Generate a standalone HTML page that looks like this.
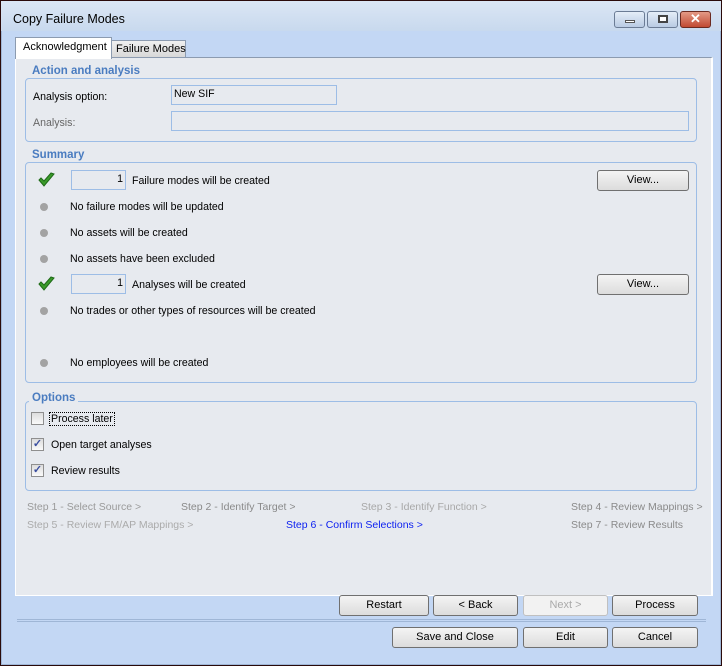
<!DOCTYPE html><html><head><style>
*{margin:0;padding:0;box-sizing:border-box}
body{width:722px;height:666px;overflow:hidden;font-family:"Liberation Sans",sans-serif;font-size:10.6px;color:#000;background:#2a0a0a;position:relative;white-space:nowrap}
.a{position:absolute}
.win{left:1px;top:1px;width:720px;height:664px;background:#c3d7f4;border:1px solid #9fb6d6}
.title{left:1px;top:1px;width:720px;height:30px;background:linear-gradient(#dbe6f4,#c8d9ee)}
.tb{height:17px;top:11px;border:1px solid #6b7c95;border-radius:3px;background:linear-gradient(#e4edf8,#b9cbe3)}
.panel{left:15px;top:57px;width:698px;height:539px;background:#e7eaef;border:1px solid #fff;border-right:2px solid #fff;border-top-color:#8c9bb0}
.grp{border:1px solid #9dbde6;border-radius:4px}
.leg{background:#e7eaef;color:#4a7cc0;font-weight:bold;font-size:11.5px;padding:0 3px}
.inp{border:1px solid #9dbde6;background:#e7eaef;height:20px;padding:2px}
.btn{height:21px;border:1px solid #707070;border-radius:3px;background:linear-gradient(#f4f4f4,#dcdcdc);text-align:center;line-height:19px;font-size:11px}
.dot{width:8px;height:8px;border-radius:50%;background:#a3a3a3}
.cb{width:13px;height:13px;border:1px solid #8f8f8f;background:linear-gradient(#ddd,#fafafa);font-size:11px;line-height:11px;text-align:center;color:#3b4fa0;font-weight:bold}
.st{color:#9a9a9a;font-size:10.5px}
.sum{font-size:10.6px}
</style></head><body>
<div class="a win"></div>
<div class="a title"></div>
<div class="a" style="left:13px;top:12px;font-size:12.5px">Copy Failure Modes</div>
<div class="a tb" style="left:614px;width:31px"><div class="a" style="left:10px;top:8px;width:10px;height:3px;background:#fff;border:1px solid #555"></div></div>
<div class="a tb" style="left:647px;width:31px"><div class="a" style="left:10px;top:3px;width:10px;height:8px;border:2px solid #444;background:#fff"></div></div>
<div class="a tb" style="left:680px;width:31px;background:linear-gradient(#e39a86,#c14a32);border-color:#6b2a20;color:#fff;font-weight:bold;text-align:center;font-size:13px;line-height:14px">✕</div>
<div class="a panel"></div>
<div class="a" style="left:15px;top:37px;width:97px;height:22px;background:#fff;border:1px solid #8c9bb0;border-bottom:none;padding:3px 0 0 7px;font-size:11px">Acknowledgment</div>
<div class="a" style="left:111px;top:40px;width:75px;height:17px;background:linear-gradient(#f0f0f0,#d8d8d8);border:1px solid #8c9bb0;border-bottom:none;padding:2px 0 0 4px;font-size:11px">Failure Modes</div>

<div class="a grp" style="left:25px;top:78px;width:672px;height:64px"></div>
<div class="a leg" style="left:29px;top:65px">Action and analysis</div>
<div class="a" style="left:33px;top:91px">Analysis option:</div>
<div class="a inp" style="left:171px;top:85px;width:166px">New SIF</div>
<div class="a" style="left:33px;top:117px;color:#666">Analysis:</div>
<div class="a inp" style="left:171px;top:111px;width:518px"></div>

<div class="a grp" style="left:25px;top:162px;width:672px;height:221px"></div>
<div class="a leg" style="left:29px;top:149px">Summary</div>
<svg class="a" style="left:38px;top:172px" width="17" height="16"><path d="M1 8 L6 14 L16 2 L13 1 L6 9 L3 6Z" fill="#3a9a2a" stroke="#1f6a18"/></svg>
<div class="a inp" style="left:71px;top:170px;width:55px;text-align:right">1</div>
<div class="a sum" style="left:132px;top:175px">Failure modes will be created</div>
<div class="a btn" style="left:597px;top:170px;width:92px">View...</div>
<div class="a dot" style="left:40px;top:203px"></div><div class="a sum" style="left:70px;top:201px">No failure modes will be updated</div>
<div class="a dot" style="left:40px;top:229px"></div><div class="a sum" style="left:70px;top:227px">No assets will be created</div>
<div class="a dot" style="left:40px;top:255px"></div><div class="a sum" style="left:70px;top:253px">No assets have been excluded</div>
<svg class="a" style="left:38px;top:276px" width="17" height="16"><path d="M1 8 L6 14 L16 2 L13 1 L6 9 L3 6Z" fill="#3a9a2a" stroke="#1f6a18"/></svg>
<div class="a inp" style="left:71px;top:274px;width:55px;text-align:right">1</div>
<div class="a sum" style="left:132px;top:279px">Analyses will be created</div>
<div class="a btn" style="left:597px;top:274px;width:92px">View...</div>
<div class="a dot" style="left:40px;top:307px"></div><div class="a sum" style="left:70px;top:305px">No trades or other types of resources will be created</div>
<div class="a dot" style="left:40px;top:359px"></div><div class="a sum" style="left:70px;top:357px">No employees will be created</div>

<div class="a grp" style="left:25px;top:401px;width:672px;height:90px"></div>
<div class="a leg" style="left:29px;top:392px">Options</div>
<div class="a cb" style="left:31px;top:412px"></div><div class="a" style="left:49px;top:412px;border:1px dotted #000;padding:0 1px">Process later</div>
<div class="a cb" style="left:31px;top:438px">✓</div><div class="a" style="left:51px;top:439px">Open target analyses</div>
<div class="a cb" style="left:31px;top:464px">✓</div><div class="a" style="left:51px;top:465px">Review results</div>

<div class="a st" style="left:27px;top:501px">Step 1 - Select Source &gt;</div>
<div class="a st" style="left:181px;top:501px;color:#8a8a8a">Step 2 - Identify Target &gt;</div>
<div class="a st" style="left:361px;top:501px;color:#a8a8a8">Step 3 - Identify Function &gt;</div>
<div class="a st" style="left:571px;top:501px;color:#8a8a8a">Step 4 - Review Mappings &gt;</div>
<div class="a st" style="left:27px;top:519px;color:#ababab">Step 5 - Review FM/AP Mappings &gt;</div>
<div class="a st" style="left:286px;top:519px;color:#0a1ef0">Step 6 - Confirm Selections &gt;</div>
<div class="a st" style="left:571px;top:519px;color:#8a8a8a">Step 7 - Review Results</div>

<div class="a btn" style="left:339px;top:595px;width:90px">Restart</div>
<div class="a btn" style="left:433px;top:595px;width:85px">&lt; Back</div>
<div class="a btn" style="left:523px;top:595px;width:85px;color:#aaa;border-color:#c0c0c0;background:#f2f2f2">Next &gt;</div>
<div class="a btn" style="left:612px;top:595px;width:86px">Process</div>
<div class="a" style="left:17px;top:619px;width:689px;height:3px;border-top:1px solid #9fb6d6;border-bottom:1px solid #9fb6d6"></div>
<div class="a btn" style="left:392px;top:627px;width:126px">Save and Close</div>
<div class="a btn" style="left:523px;top:627px;width:85px">Edit</div>
<div class="a btn" style="left:612px;top:627px;width:86px">Cancel</div>
</body></html>
